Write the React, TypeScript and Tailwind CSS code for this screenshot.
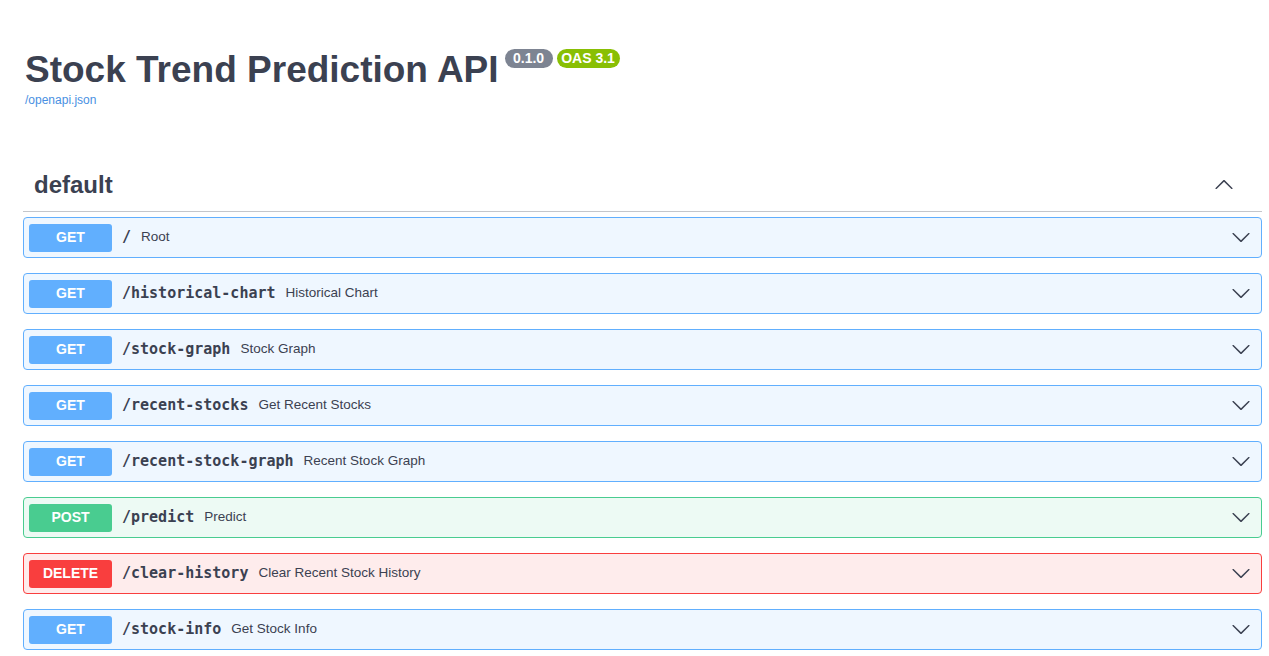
import React from "react";

type Op = {
  method: "GET" | "POST" | "DELETE";
  path: string;
  summary: string;
};

const ops: Op[] = [
  { method: "GET", path: "/", summary: "Root" },
  { method: "GET", path: "/historical-chart", summary: "Historical Chart" },
  { method: "GET", path: "/stock-graph", summary: "Stock Graph" },
  { method: "GET", path: "/recent-stocks", summary: "Get Recent Stocks" },
  { method: "GET", path: "/recent-stock-graph", summary: "Recent Stock Graph" },
  { method: "POST", path: "/predict", summary: "Predict" },
  { method: "DELETE", path: "/clear-history", summary: "Clear Recent Stock History" },
  { method: "GET", path: "/stock-info", summary: "Get Stock Info" },
];

const styles = {
  GET: { block: "border-[#61affe] bg-[#eff7ff]", badge: "bg-[#61affe]" },
  POST: { block: "border-[#49cc90] bg-[#edfaf4]", badge: "bg-[#49cc90]" },
  DELETE: { block: "border-[#f93e3e] bg-[#feecec]", badge: "bg-[#f93e3e]" },
};

const Arrow = ({ up = false }: { up?: boolean }) => (
  <svg
    viewBox="0 0 20 20"
    width={20}
    height={20}
    className={up ? "rotate-180 fill-[#3b4151]" : "fill-[#3b4151]"}
  >
    <path d="M17.418 6.109c.272-.268.709-.268.979 0s.271.701 0 .969l-7.908 7.83c-.27.268-.707.268-.979 0l-7.908-7.83c-.27-.268-.27-.701 0-.969.271-.268.709-.268.979 0L10 13.25l7.418-7.141z" />
  </svg>
);

const OpBlock = ({ op }: { op: Op }) => {
  const s = styles[op.method];
  return (
    <div
      className={`flex items-center h-[41px] mb-[15px] border rounded-[4px] pl-[5px] pr-[10px] ${s.block}`}
    >
      <div
        className={`flex items-center justify-center w-[83px] h-[28px] rounded-[3px] text-white text-[14px] font-bold ${s.badge}`}
      >
        {op.method}
      </div>
      <span className="pl-[10px] pr-[10px] font-['DejaVu_Sans_Mono',monospace] font-bold text-[15px]">
        {op.path}
      </span>
      <span className="text-[13.5px]">{op.summary}</span>
      <div className="ml-auto flex items-center -mt-[2px]">
        <Arrow />
      </div>
    </div>
  );
};

export default function App() {
  return (
    <div className="min-h-screen bg-white pl-[23px] pr-[7px] pt-[48px] font-['Liberation_Sans',Arial,sans-serif] text-[#3b4151]">
      {/* info */}
      <div className="pl-[2px]">
        <div className="flex items-start">
          <h2 className="text-[37px] leading-[44px] font-bold">
            Stock Trend Prediction API
          </h2>
          <span className="ml-[6px] mt-[1px] flex items-center justify-center w-[48px] h-[19px] rounded-full bg-[#7d8492] text-white text-[14px] font-bold">
            0.1.0
          </span>
          <span className="ml-[4px] mt-[1px] flex items-center justify-center w-[63px] h-[19px] rounded-full bg-[#89bf04] text-white text-[14px] font-bold">
            OAS 3.1
          </span>
        </div>
        <a className="block text-[12px] leading-[16px] text-[#4990e2]">
          /openapi.json
        </a>
      </div>

      {/* tag */}
      <div className="mt-[59px] flex items-center justify-between h-[45px] pb-[8px] pl-[11px] pr-[28px] border-b border-[#c4c6cb]">
        <h3 className="text-[24px] font-bold">default</h3>
        <Arrow up />
      </div>

      <div className="mt-[5px]">
        {ops.map((op) => (
          <OpBlock key={op.path} op={op} />
        ))}
      </div>
    </div>
  );
}
